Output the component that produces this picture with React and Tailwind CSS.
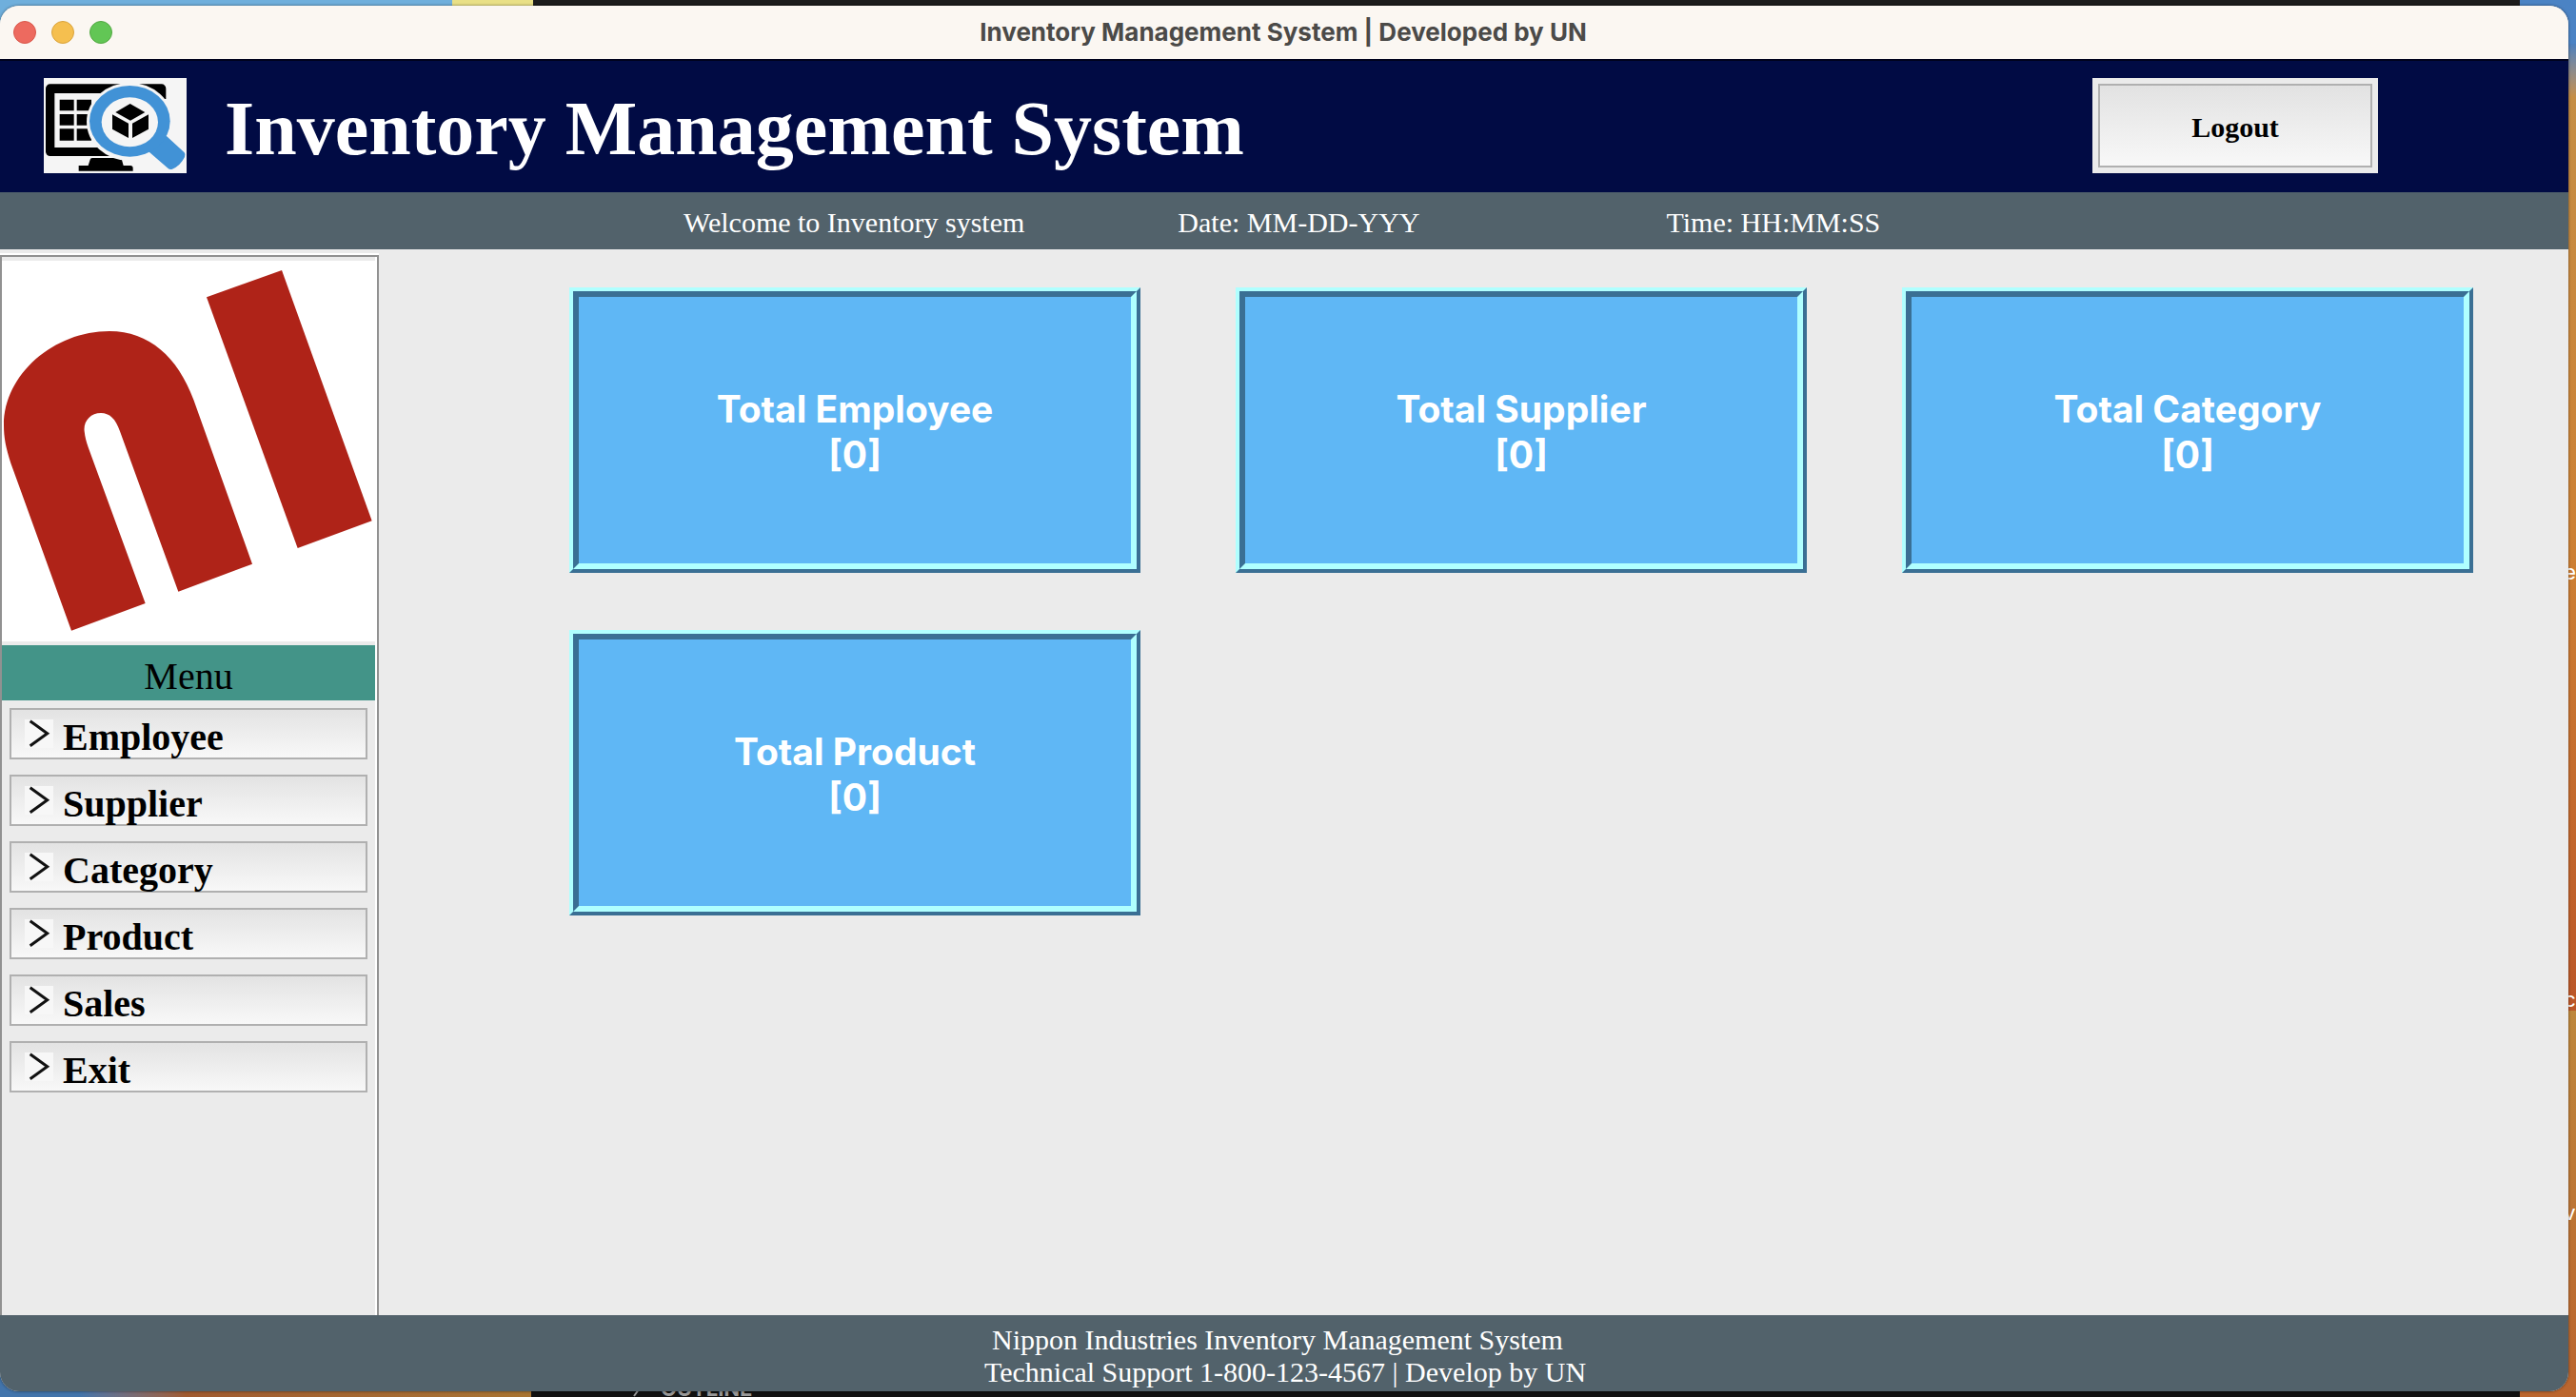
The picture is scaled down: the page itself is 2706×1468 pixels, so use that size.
import React from "react";

const menuItems = ["Employee", "Supplier", "Category", "Product", "Sales", "Exit"];

const stats = [
  { label: "Total Employee", value: 0 },
  { label: "Total Supplier", value: 0 },
  { label: "Total Category", value: 0 },
  { label: "Total Product", value: 0 },
];

function InventoryLogo() {
  return (
    <svg viewBox="18 18 450 300" className="h-[100px] w-[150px] shrink-0 bg-[#f5f5f5]" aria-hidden="true">
      <rect x="24" y="37" width="379" height="227" rx="14" fill="#000" />
      <rect x="52" y="66" width="323" height="171" fill="#f5f5f5" />
      <path d="M376 84h34v190h-110v-40h76z" fill="#f5f5f5" />
      <g fill="#000">
        <path d="M68 86h45v35H68zM122 86h46v35h-46zM68 132h45v35H68zM122 132h46v35h-46zM68 178h45v37H68zM122 178h46v37h-46z" />
        <path d="M170 270h86q8 0 9 10l4 14h22q8 0 8 8v9H128v-17h30l5-16q1-8 7-8z" />
      </g>
      <ellipse cx="289" cy="156" rx="136" ry="123" fill="#f5f5f5" />
      <path d="M404 200l57 53q5 6 1 14-14 28-39 38-8 3-14-3l-64-55z" fill="#4192d6" />
      <ellipse cx="289" cy="154" rx="127" ry="112" fill="#4192d6" />
      <ellipse cx="289" cy="157" rx="89" ry="78" fill="#f5f5f5" />
      <g fill="#000">
        <path d="M290 99l47 27-46 26-47-26z" />
        <path d="M234 133l51 28v46l-51-28z" />
        <path d="M348 133l-51 28v46l51-28z" />
      </g>
    </svg>
  );
}

function CompanyLogo() {
  return (
    <svg viewBox="6 42 1176 1200" className="block h-[400px] w-full bg-white" role="img" aria-label="Nippon Industries">
      <g fill="#af2318">
        <path d="M651 157L888 72L1172 862L938 948Z" />
        <path d="M225 1208L34 680C18 630 12 600 12 560C12 400 170 264 345 264C470 264 560 345 610 480L795 998L562 1085L378 580C365 540 345 522 318 522C285 522 262 548 266 580C268 600 272 612 278 630L458 1122Z" />
      </g>
    </svg>
  );
}

function ArrowIcon() {
  return (
    <svg viewBox="0 0 90 90" className="size-[30px] shrink-0 bg-[#f7f7f7]" aria-hidden="true">
      <path d="M17 5L71 44L17 83" fill="none" stroke="#111" strokeWidth="9" />
    </svg>
  );
}

function Sidebar() {
  return (
    <aside className="mt-1 flex w-[398px] shrink-0 flex-col border-t-2 border-white">
      <div className="flex-1 border-t-2 border-r-2 border-l-2 border-[#919191]">
        <div className="h-full border-r-2 border-white">
          <div className="py-1">
            <CompanyLogo />
          </div>
          <h2 className="h-[58px] bg-[#439488] pt-[9px] text-center text-[40px] leading-[48px] text-black">Menu</h2>
          <nav className="flex flex-col gap-4 p-2">
            {menuItems.map((item) => (
              <button
                key={item}
                type="button"
                className="flex h-[54px] items-start border-2 border-[#b0b0b0] bg-linear-to-b from-[#e3e3e3] to-[#f8f8f8] pt-[10px] pl-[14px] text-left text-[40px] leading-[38px] font-bold text-black"
              >
                <ArrowIcon />
                <span className="pl-[10px]">{item}</span>
              </button>
            ))}
          </nav>
        </div>
      </div>
    </aside>
  );
}

function StatCard({ label, value }) {
  return (
    <section className="h-[300px] border-4 border-t-[#b0ffff] border-r-[#3a6f94] border-b-[#3a6f94] border-l-[#b0ffff]">
      <div className="flex h-full flex-col items-center justify-center border-6 border-t-[#3a6f94] border-r-[#b0ffff] border-b-[#b0ffff] border-l-[#3a6f94] bg-[#5fb7f5] pt-1 text-center font-[Inter,sans-serif] text-[39px] leading-[48px] font-bold text-white">
        <h3>{label}</h3>
        <p>[{value}]</p>
      </div>
    </section>
  );
}

function Desktop() {
  return (
    <div className="absolute inset-0 flex flex-col" aria-hidden="true">
      <div className="flex h-[6px]">
        <div className="w-[475px] bg-[#6fafdc]" />
        <div className="w-[85px] bg-[#e9e086]" />
        <div className="flex-1 bg-[#1c1c1c]" />
        <div className="w-[59px] bg-[#4b83c4]" />
      </div>
      <div className="flex-1 bg-[#bd7233]">
        <div className="h-10 w-full bg-linear-to-r from-[#6fafdc] to-[#4b83c4]" />
        <div className="h-14 w-full bg-linear-to-b from-[#4b7fbd] to-[#c58e45]" />
        <div className="h-[480px] w-full bg-linear-to-b from-[#c58e45] to-[#cd8034]" />
        <div className="h-[480px] w-full bg-linear-to-b from-[#cd8034] to-[#bb5628]" />
        <div className="h-[380px] w-full bg-linear-to-b from-[#be873c] to-[#bb662f]" />
      </div>
      <div className="flex h-[26px]">
        <div className="w-[558px] bg-linear-to-r from-[#4274ab] from-15% via-[#a05a30] via-35% to-[#a87432]" />
        <div className="flex flex-1 items-end bg-[#111] pl-[106px]">
          <svg viewBox="0 0 12 20" className="h-5 w-3">
            <path d="M2 2L10 8L2 19" fill="none" stroke="#999" strokeWidth="2" />
          </svg>
          <span className="pl-[18px] font-[Inter,sans-serif] text-[22px] leading-[18px] font-bold text-[#999]">OUTLINE</span>
        </div>
        <div className="w-[59px] bg-[#bb662f]" />
      </div>
      <div className="absolute top-[585px] right-0 font-[Inter,sans-serif] text-[22px] leading-[32px] text-white">
        <p>e</p>
        <p className="pt-[417px]">c</p>
        <p className="pt-[192px]">v</p>
      </div>
    </div>
  );
}

export default function App() {
  return (
    <div className="relative flex min-h-screen flex-col overflow-hidden pt-[6px] pr-2 pb-[6px] font-['Liberation_Serif',serif]">
      <Desktop />
      <div className="relative flex flex-1 flex-col overflow-hidden rounded-[20px] bg-[#ebebeb] shadow-[0_0_3px_#0008]">
        <div className="flex h-[56px] items-center bg-[#fbf7f2] pl-[14px]">
          <div className="flex gap-4">
            <button type="button" aria-label="Close" className="size-6 rounded-full border border-[#d9574b] bg-[#ed6a5f]" />
            <button type="button" aria-label="Minimize" className="size-6 rounded-full border border-[#d9a33c] bg-[#f5bf4f]" />
            <button type="button" aria-label="Zoom" className="size-6 rounded-full border border-[#52a842] bg-[#62c655]" />
          </div>
          <p className="flex-1 pr-[120px] text-center font-[Inter,sans-serif] text-[26px] leading-[32px] font-bold text-[#4b4a48]">
            Inventory Management System | Developed by UN
          </p>
        </div>

        <header className="flex h-[140px] items-center border-t-2 border-[#00021c] bg-[#010b44] pr-[200px] pb-[2px] pl-[46px]">
          <InventoryLogo />
          <h1 className="flex-1 pt-[6px] pl-10 text-[80px] leading-[92px] font-bold text-white">Inventory Management System</h1>
          <div className="bg-[#ebebeb] p-[6px]">
            <button
              type="button"
              className="block h-[88px] w-[288px] border-2 border-[#b0b0b0] bg-linear-to-b from-[#e2e2e2] to-[#f8f8f8] pt-1 text-[30px] leading-[34px] font-bold text-black"
            >
              Logout
            </button>
          </div>
        </header>

        <div className="flex h-[60px] items-center bg-[#52626b] pt-1 pl-[718px] text-[30px] leading-[34px] text-white">
          <p>Welcome to Inventory system</p>
          <p className="pl-[161px]">Date: MM-DD-YYY</p>
          <p className="pl-[259px]">Time: HH:MM:SS</p>
        </div>

        <div className="flex flex-1">
          <Sidebar />
          <main className="grid flex-1 grid-cols-3 content-start gap-x-[100px] gap-y-[60px] pt-10 pr-[100px] pl-[200px]">
            {stats.map((stat) => (
              <StatCard key={stat.label} label={stat.label} value={stat.value} />
            ))}
          </main>
        </div>

        <footer className="flex h-[80px] flex-col items-center justify-center bg-[#52626b] pt-[5px] text-[30px] leading-[34px] text-white">
          <p className="pr-[14px]">Nippon Industries Inventory Management System</p>
          <p className="pl-[2px]">Technical Support 1-800-123-4567 | Develop by UN</p>
        </footer>
      </div>
    </div>
  );
}
